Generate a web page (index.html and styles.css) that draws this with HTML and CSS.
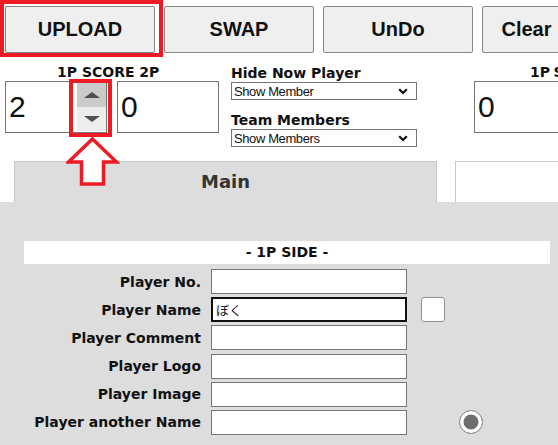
FILE: index.html
```html
<!DOCTYPE html>
<html lang="ja">
<head>
  <meta charset="UTF-8">
  <meta name="viewport" content="width=device-width, initial-scale=1.0">
  <title>Score Control</title>
  <link rel="stylesheet" href="styles.css">
</head>
<body>
  <div class="page">
    <div class="toolbar">
      <button class="tool-btn">UPLOAD</button>
      <button class="tool-btn">SWAP</button>
      <button class="tool-btn">UnDo</button>
      <button class="tool-btn tool-btn-small">Clear</button>
    </div>

    <div class="controls">
      <div class="score">
        <div class="score-title">1P SCORE 2P</div>
        <div class="score-inputs">
          <div class="score-box">
            <input class="score-value" type="text" value="2">
            <div class="spinner">
              <span class="spin spin-up"></span>
              <span class="spin spin-down"></span>
            </div>
          </div>
          <div class="score-box">
            <input class="score-value" type="text" value="0">
          </div>
        </div>
      </div>

      <div class="filters">
        <label class="filter-label">Hide Now Player</label>
        <div class="select-wrap">
          <select class="filter-select">
            <option>Show Member</option>
          </select>
          <svg class="select-caret" width="10" height="7" viewBox="0 0 10 7">
            <polyline points="1.2,1.2 5,5 8.8,1.2" fill="none" stroke="#111" stroke-width="2.2"/>
          </svg>
        </div>
        <label class="filter-label filter-label-second">Team Members</label>
        <div class="select-wrap">
          <select class="filter-select">
            <option>Show Members</option>
          </select>
          <svg class="select-caret" width="10" height="7" viewBox="0 0 10 7">
            <polyline points="1.2,1.2 5,5 8.8,1.2" fill="none" stroke="#111" stroke-width="2.2"/>
          </svg>
        </div>
      </div>

      <div class="score score-right">
        <div class="score-title">1P SCORE 2P</div>
        <div class="score-inputs">
          <div class="score-box">
            <input class="score-value" type="text" value="0">
          </div>
        </div>
      </div>
    </div>

    <div class="tabs">
      <div class="tab tab-active">Main</div>
      <div class="tab tab-idle"></div>
    </div>

    <div class="panel">
      <div class="side-title">- 1P SIDE -</div>
      <div class="player-form">
        <label class="field-label">Player No.</label>
        <input class="field-input" type="text">
        <span></span>

        <label class="field-label">Player Name</label>
        <input class="field-input is-focused" type="text" value="ぼく">
        <span><input class="check" type="checkbox"></span>

        <label class="field-label">Player Comment</label>
        <input class="field-input" type="text">
        <span></span>

        <label class="field-label">Player Logo</label>
        <input class="field-input" type="text">
        <span></span>

        <label class="field-label">Player Image</label>
        <input class="field-input" type="text">
        <span></span>

        <label class="field-label">Player another Name</label>
        <input class="field-input" type="text">
        <span><input class="radio" type="radio" checked></span>
      </div>
    </div>

    <!-- red marks drawn over the screenshot -->
    <div class="mark mark-upload"></div>
    <div class="mark mark-spinner"></div>
    <svg class="mark-arrow" width="54" height="52" viewBox="0 0 54 52">
      <polygon points="26.5,3 50.5,26 37.5,26 37.5,48 15.5,48 15.5,26 2.5,26" fill="#fff" stroke="#ed1c24" stroke-width="3.5" stroke-linejoin="miter"/>
    </svg>
  </div>
</body>
</html>
```

FILE: styles.css
```css
body {
  margin: 0;
  padding: 0;
  background: #fff;
  font-family: "DejaVu Sans", Verdana, sans-serif;
  color: #111;
  overflow: hidden;
}

.page {
  position: relative;
  width: 558px;
  height: 445px;
  overflow: hidden;
}

/* top buttons */
.toolbar {
  display: flex;
  gap: 9px;
  padding: 6px 0 0 5px;
  width: 900px;
}

.tool-btn {
  flex: none;
  width: 150px;
  height: 47px;
  background: #efefef;
  border: 1px solid #858585;
  border-radius: 2px;
  font-family: "Liberation Sans", Arial, sans-serif;
  font-weight: bold;
  font-size: 20px;
  color: #111;
  padding: 0;
}

.tool-btn-small {
  width: 89px;
}

/* score + filters */
.controls {
  display: flex;
  align-items: flex-start;
  margin-top: 11px;
  width: 900px;
}

.score {
  flex: none;
  width: 214px;
  margin-left: 5px;
}

.score-title {
  font-weight: bold;
  font-size: 14px;
  line-height: 16px;
  padding-left: 52px;
  white-space: nowrap;
}

.score-right {
  margin-left: 57px;
}

.score-right .score-title {
  padding-left: 56px;
  word-spacing: -1.5px;
}

.score-inputs {
  display: flex;
  gap: 10px;
  margin-top: 1px;
}

.score-box {
  display: flex;
  box-sizing: border-box;
  width: 102px;
  height: 52px;
  border: 1px solid #767676;
  background: #fff;
}

.score-value {
  flex: 1;
  min-width: 0;
  border: none;
  outline: none;
  padding: 0 0 0 3px;
  font-family: "Liberation Sans", Arial, sans-serif;
  font-size: 30px;
  color: #111;
  background: transparent;
}

.spinner {
  flex: none;
  width: 29px;
  margin: 1px 0 1px 0;
  display: flex;
  flex-direction: column;
}

.spin {
  flex: 1;
  display: flex;
  align-items: center;
  justify-content: center;
}

.spin-up {
  background: #cbcbcb;
}

.spin-down {
  background: #ededed;
}

.spin-up::before {
  content: "";
  border-left: 8.5px solid transparent;
  border-right: 8.5px solid transparent;
  border-bottom: 6px solid #505050;
}

.spin-down::before {
  content: "";
  border-left: 8.5px solid transparent;
  border-right: 8.5px solid transparent;
  border-top: 6px solid #505050;
}

.filters {
  flex: none;
  display: flex;
  flex-direction: column;
  width: 186px;
  margin: 1px 0 0 12px;
}

.filter-label {
  font-weight: bold;
  font-size: 14px;
  line-height: 16px;
}

.filter-label-second {
  margin-top: 12px;
}

.select-wrap {
  position: relative;
  margin-top: 1px;
  height: 18px;
}

.filter-select {
  appearance: none;
  display: block;
  box-sizing: border-box;
  width: 186px;
  height: 18px;
  margin: 0;
  padding: 0 0 0 2px;
  border: 1px solid #767676;
  border-radius: 0;
  background: #fff;
  font-family: "Liberation Sans", Arial, sans-serif;
  font-size: 13px;
  letter-spacing: -0.4px;
  color: #111;
}

.select-caret {
  position: absolute;
  right: 9px;
  top: 6px;
  pointer-events: none;
}

/* tabs */
.tabs {
  display: flex;
  gap: 18px;
  margin-top: 14px;
  padding-left: 14px;
  width: 1000px;
}

.tab {
  flex: none;
  box-sizing: border-box;
  width: 423px;
  height: 41px;
  padding-bottom: 2px;
  border: 1px solid #c8c8c8;
  border-bottom: none;
  font-weight: bold;
  font-size: 18px;
  color: #333;
  display: flex;
  align-items: center;
  justify-content: center;
}

.tab-active {
  background: #ddd;
}

.tab-idle {
  background: #fff;
}

/* main panel */
.panel {
  background: #ddd;
  width: 1000px;
  height: 260px;
  padding-top: 39px;
}

.side-title {
  margin-left: 24px;
  width: 526px;
  height: 23px;
  line-height: 23px;
  background: #fff;
  text-align: center;
  font-weight: bold;
  font-size: 14px;
}

.player-form {
  display: grid;
  grid-template-columns: 201px 196px 60px;
  grid-auto-rows: 25px;
  column-gap: 10px;
  row-gap: 3.2px;
  align-items: center;
  margin-top: 5px;
}

.field-label {
  text-align: right;
  font-weight: bold;
  font-size: 14px;
}

.field-input {
  box-sizing: border-box;
  width: 196px;
  height: 25px;
  margin: 0;
  padding: 0 4px;
  border: 1px solid #767676;
  background: #fff;
  font-family: "Noto Sans CJK JP", "Liberation Sans", sans-serif;
  font-size: 13px;
  color: #111;
  outline: none;
}

.field-input.is-focused {
  border: 2px solid #101010;
  padding: 0 3px;
}

.check {
  appearance: none;
  box-sizing: border-box;
  display: block;
  width: 24px;
  height: 25px;
  margin: 0 0 0 4px;
  border: 1px solid #909090;
  border-radius: 3px;
  background: #fff;
}

.radio {
  appearance: none;
  box-sizing: border-box;
  display: block;
  width: 24px;
  height: 24px;
  margin: 0 0 0 42px;
  border: 1px solid #9a9a9a;
  border-radius: 50%;
  background: #6d6d6d;
  box-shadow: inset 0 0 0 3.5px #fff;
}

/* annotation marks */
.mark {
  position: absolute;
  box-sizing: border-box;
  border: 4px solid #ed1c24;
}

.mark-upload {
  left: 0;
  top: 0;
  width: 163px;
  height: 57px;
}

.mark-spinner {
  left: 69px;
  top: 79px;
  width: 43px;
  height: 58px;
}

.mark-arrow {
  position: absolute;
  left: 66px;
  top: 136px;
}
```
